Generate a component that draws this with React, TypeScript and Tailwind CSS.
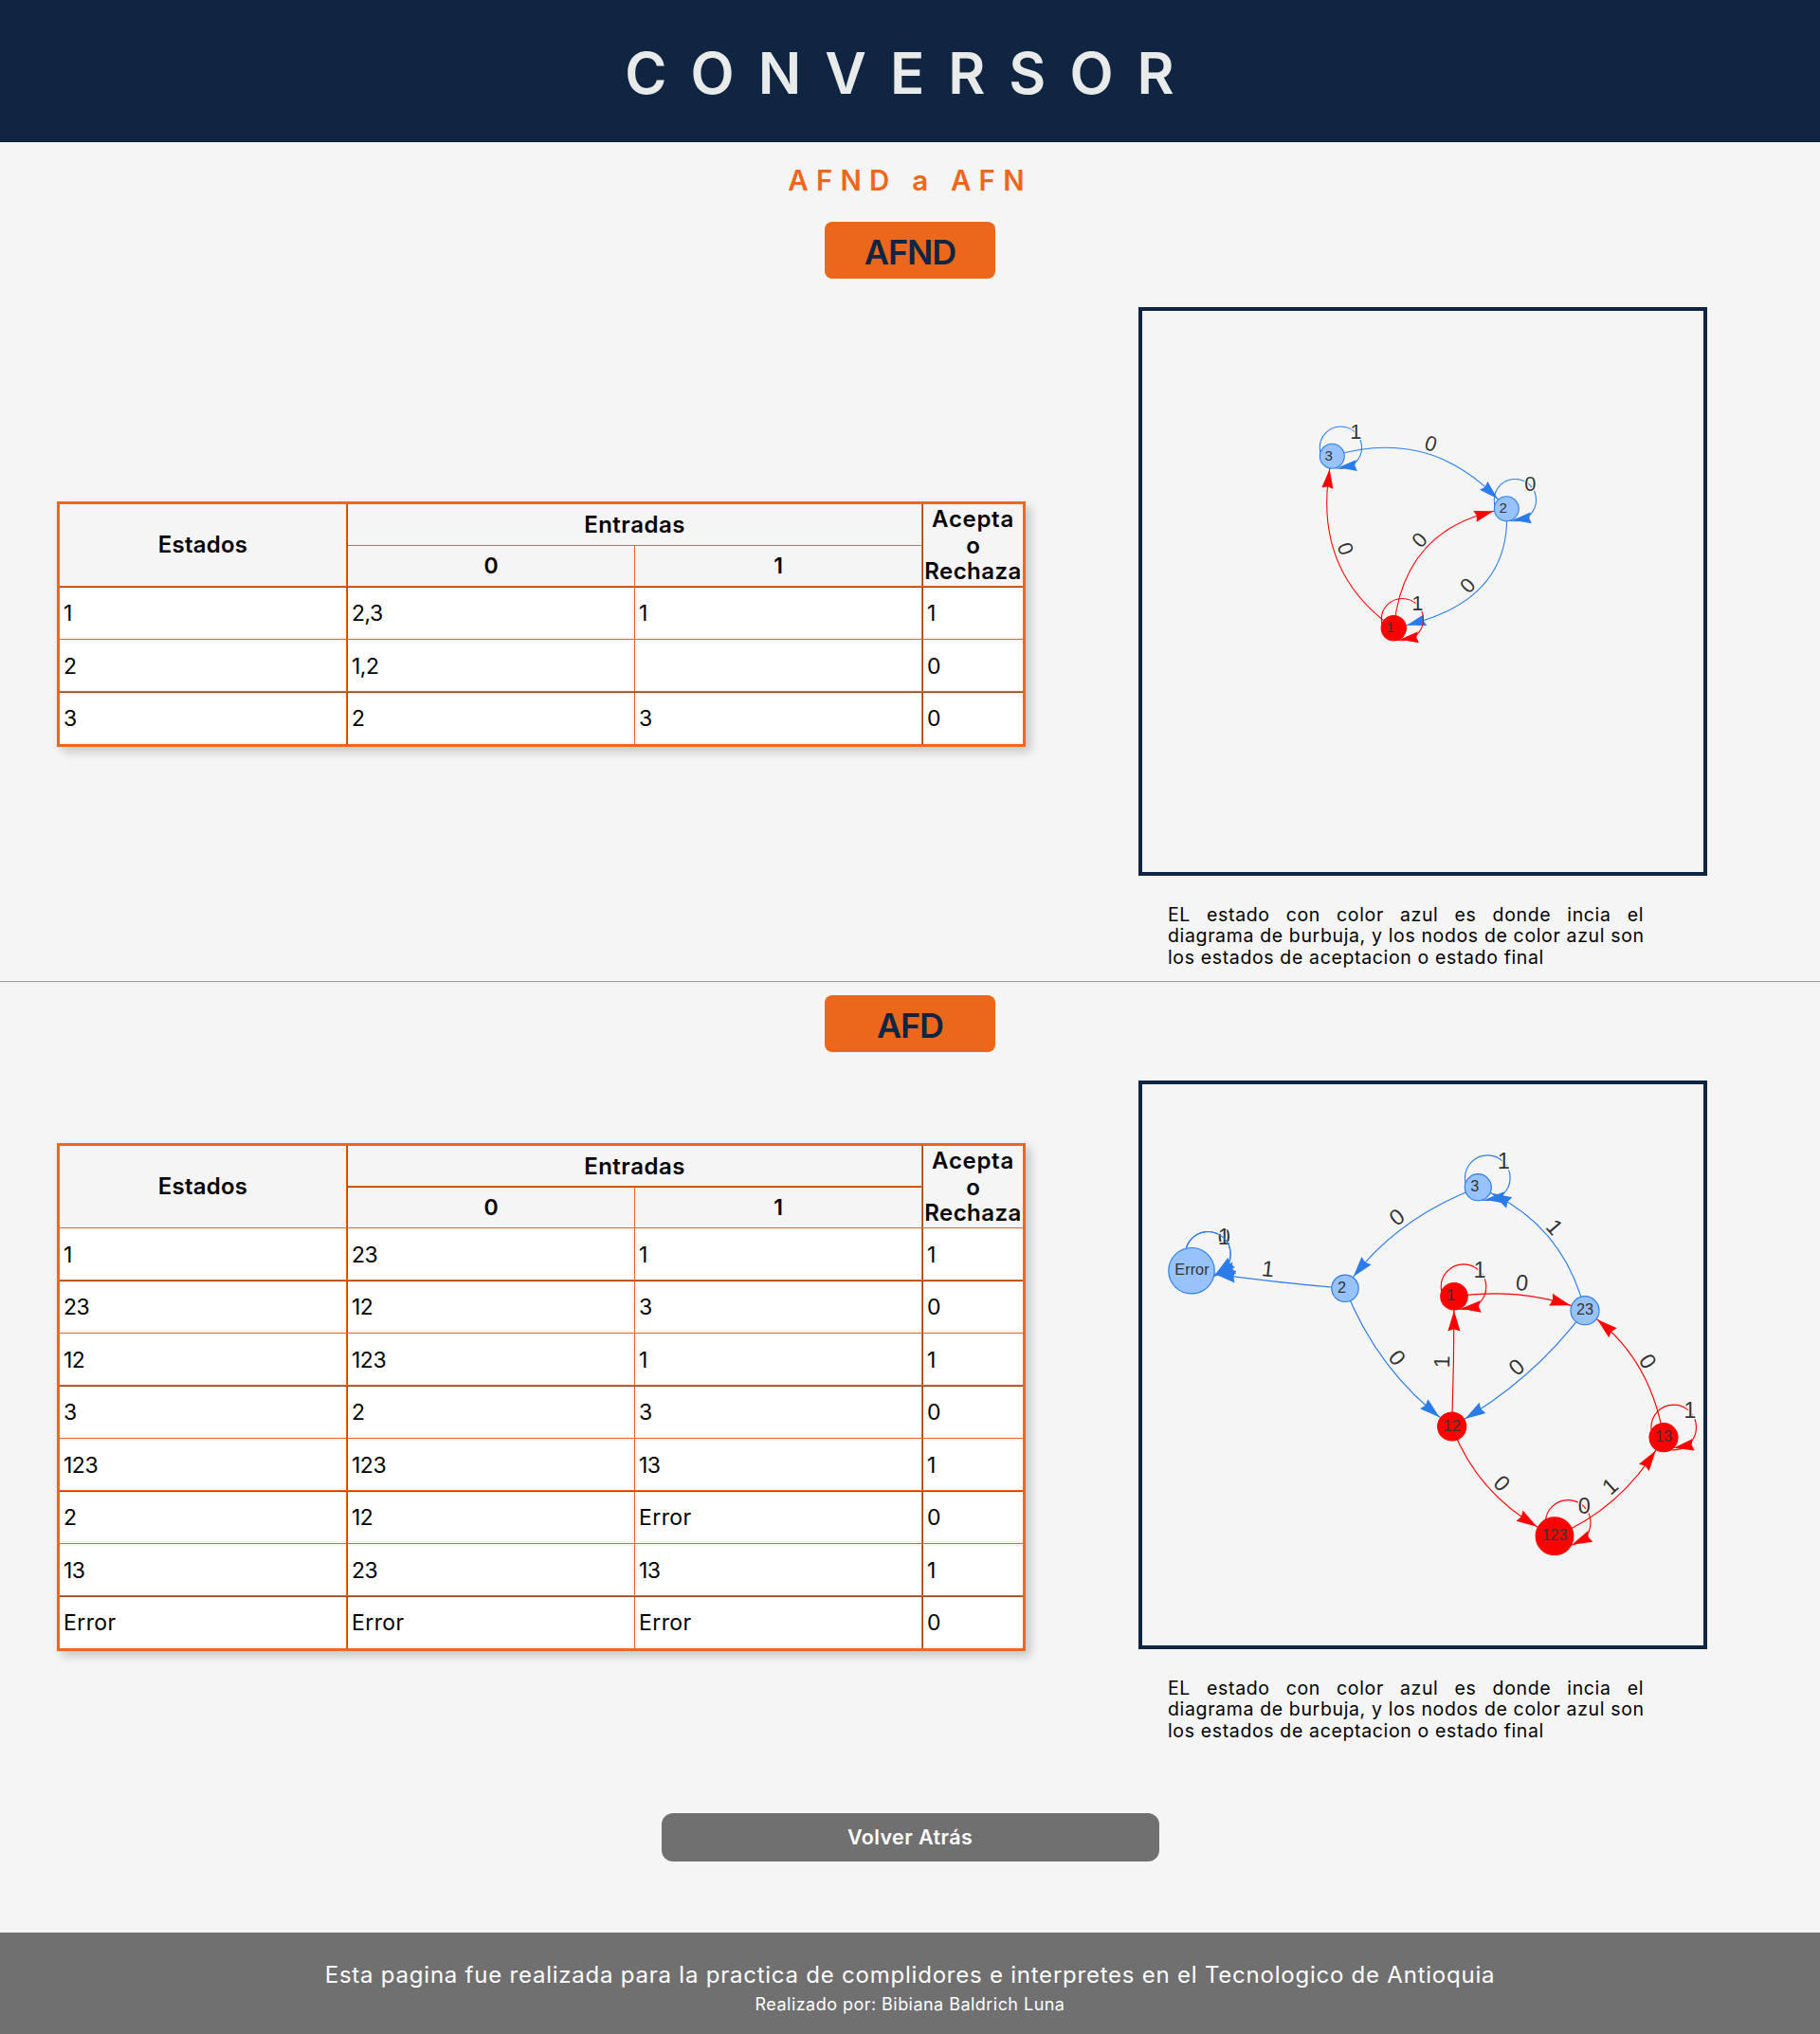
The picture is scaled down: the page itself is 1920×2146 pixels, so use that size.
import type { ReactNode } from 'react';

type Row = string[];

/* ---------- transition tables ---------- */

function VThick() {
  return <div className="w-[2px] shrink-0 border-r border-[#9c4617] bg-[#ee671c]" />;
}

function VThin() {
  return <div className="w-px shrink-0 bg-[#ee671c]" />;
}

function HLine({ thick }: { thick: boolean }) {
  return thick ? (
    <div className="h-[2px] border-b border-[#9c4617] bg-[#ee671c]" />
  ) : (
    <div className="h-px bg-[#ee671c]" />
  );
}

function BodyRow({ row, thickAbove }: { row: Row; thickAbove: boolean }) {
  const pad = thickAbove ? 'pt-px pb-[2px]' : 'pt-[2px] pb-px';
  const text = `flex h-full items-center bg-white ${thickAbove ? 'pt-[2px]' : 'pt-px'}`;
  const track = (s: string) => (s === 'Error' ? 'tracking-[0.4px]' : 'tracking-[-0.5px]');
  return (
    <div className="flex h-[54px] text-[23px] leading-none">
      <div className={`w-[302px] pl-px ${pad}`}>
        <div className={`${text} pl-[3px] ${track(row[0])}`}>{row[0]}</div>
      </div>
      <VThick />
      <div className={`w-[302px] pr-[2px] ${pad}`}>
        <div className={`${text} pl-1 ${track(row[1])}`}>{row[1]}</div>
      </div>
      <VThin />
      <div className={`w-[302px] pl-[2px] ${pad}`}>
        <div className={`${text} pl-[2px] ${track(row[2])}`}>{row[2]}</div>
      </div>
      <VThick />
      <div className={`w-[105px] ${pad}`}>
        <div className={`${text} pl-1`}>{row[3]}</div>
      </div>
    </div>
  );
}

function StateTable({ rows, thickFirst }: { rows: Row[]; thickFirst: boolean }) {
  return (
    <div className="w-[1022px] border-[3px] border-[#ee671c] shadow-[5px_5px_10px_rgba(0,0,0,0.2)]">
      <div className="flex h-[86px] bg-[#f5f5f5] text-[24px] font-semibold leading-none">
        <div className="flex w-[302px] items-center justify-center tracking-[0.2px]">Estados</div>
        <VThick />
        <div className="flex w-[605px] flex-col">
          <div className="flex flex-1 items-center justify-center pt-px tracking-[0.5px]">Entradas</div>
          <HLine thick={!thickFirst} />
          <div className="flex h-[42px]">
            <div className="flex w-[302px] items-center justify-center text-[23px]">0</div>
            <VThin />
            <div className="flex w-[302px] items-center justify-center text-[23px]">1</div>
          </div>
        </div>
        <VThick />
        <div className="flex w-[105px] flex-col items-center justify-center pt-px leading-[27.5px]">
          <span className="tracking-[0.7px]">Acepta</span>
          <span>o</span>
          <span className="tracking-[0.45px]">Rechaza</span>
        </div>
      </div>
      {rows.map((row, i) => {
        const thick = thickFirst ? i % 2 === 0 : i % 2 === 1;
        return (
          <div key={i}>
            <HLine thick={thick} />
            <BodyRow row={row} thickAbove={thick} />
          </div>
        );
      })}
    </div>
  );
}

/* ---------- state diagrams ---------- */

type Pt = [number, number];
const BLUE = '#2B7CE9';
const RED = '#ff0000';

function Arrow({ tip, angle, size, color }: { tip: Pt; angle: number; size: number; color: string }) {
  const pts = [
    [0, 0],
    [-1, 0.3],
    [-0.9, 0],
    [-1, -0.3],
  ]
    .map(([x, y]) => {
      const px = x * size;
      const py = y * size;
      return `${tip[0] + px * Math.cos(angle) - py * Math.sin(angle)},${
        tip[1] + px * Math.sin(angle) + py * Math.cos(angle)
      }`;
    })
    .join(' ');
  return <polygon points={pts} fill={color} />;
}

function EdgeLabel({ at, deg, zoom, children }: { at: Pt; deg?: number; zoom: number; children: ReactNode }) {
  const size = 20.5 * zoom;
  return (
    <text
      transform={`translate(${at[0]} ${at[1]}) rotate(${deg ?? 0})`}
      y={size * 0.36}
      fontSize={size}
      textAnchor="middle"
      fill="#343434"
      stroke="#ffffff"
      strokeWidth={2 * zoom}
      strokeLinejoin="round"
      paintOrder="stroke"
    >
      {children}
    </text>
  );
}

type Edge = { from: Pt; via: Pt; to: Pt; r: number; color: string; label: string; at: Pt; deg: number };

function CurvedEdge({ edge, zoom }: { edge: Edge; zoom: number }) {
  const { from, via, to, r, color, label, at, deg } = edge;
  const point = (t: number): Pt => [
    (1 - t) * (1 - t) * from[0] + 2 * t * (1 - t) * via[0] + t * t * to[0],
    (1 - t) * (1 - t) * from[1] + 2 * t * (1 - t) * via[1] + t * t * to[1],
  ];
  let lo = 0.4;
  let hi = 1;
  for (let i = 0; i < 20; i++) {
    const mid = (lo + hi) / 2;
    const p = point(mid);
    if (Math.hypot(p[0] - to[0], p[1] - to[1]) > r) lo = mid;
    else hi = mid;
  }
  const tip = point(lo);
  const guide = point(lo - 0.1);
  return (
    <g>
      <path
        d={`M${from[0]} ${from[1]}Q${via[0]} ${via[1]} ${to[0]} ${to[1]}`}
        fill="none"
        stroke={color}
        strokeWidth={zoom}
      />
      <Arrow tip={tip} angle={Math.atan2(tip[1] - guide[1], tip[0] - guide[0])} size={19 * zoom} color={color} />
      <EdgeLabel at={at} deg={deg} zoom={zoom}>
        {label}
      </EdgeLabel>
    </g>
  );
}

type Loop = { node: Pt; off: number; color: string; labels: string[]; tip: Pt; back: Pt };

function SelfLoop({ loop, zoom }: { loop: Loop; zoom: number }) {
  const { node, off, color, labels, tip, back } = loop;
  const cx = node[0] + off;
  const cy = node[1] - off;
  return (
    <g>
      <circle cx={cx} cy={cy} r={20.7 * zoom} fill="none" stroke={color} strokeWidth={zoom} />
      <Arrow
        tip={[node[0] + tip[0], node[1] + tip[1]]}
        angle={Math.atan2(tip[1] - back[1], tip[0] - back[0])}
        size={18.5 * zoom}
        color={color}
      />
      {labels.map((l) => (
        <EdgeLabel key={l} at={[cx + 14.8 * zoom, cy - 16 * zoom]} zoom={zoom}>
          {l}
        </EdgeLabel>
      ))}
    </g>
  );
}

type StateNode = { at: Pt; r: number; label: string; red?: boolean; dx?: number };

function Diagram({
  viewBox,
  zoom,
  nodes,
  edges,
  loops,
}: {
  viewBox: string;
  zoom: number;
  nodes: StateNode[];
  edges: Edge[];
  loops: Loop[];
}) {
  return (
    <div className="h-[600px] w-[600px] border-4 border-[#102542]">
      <svg viewBox={viewBox} className="block h-full w-full font-['Liberation_Sans',Arial,sans-serif]">
        {edges.map((e, i) => (
          <CurvedEdge key={i} edge={e} zoom={zoom} />
        ))}
        {loops.map((l, i) => (
          <SelfLoop key={i} loop={l} zoom={zoom} />
        ))}
        {nodes.map((n) => (
          <g key={n.label}>
            <circle
              cx={n.at[0]}
              cy={n.at[1]}
              r={n.r - zoom / 2}
              fill={n.red ? RED : '#97C2FC'}
              stroke={n.red ? RED : BLUE}
              strokeWidth={zoom}
            />
            <text
              x={n.at[0] + (n.dx ?? 0)}
              y={n.at[1] - 1 + 14 * zoom * 0.36}
              fontSize={14.2 * zoom}
              textAnchor="middle"
              fill="#343434"
            >
              {n.label}
            </text>
          </g>
        ))}
      </svg>
    </div>
  );
}

const A1: Pt = [1470.3, 662.7];
const A2: Pt = [1589.3, 536.7];
const A3: Pt = [1405.3, 481.3];

const afndNodes: StateNode[] = [
  { at: A3, r: 13.5, label: '3', dx: -3.5 },
  { at: A2, r: 13.5, label: '2', dx: -3.5 },
  { at: A1, r: 13.7, label: '1', dx: -3.5, red: true },
];
const afndEdges: Edge[] = [
  { from: A3, via: [1514, 448.3], to: A2, r: 14, color: BLUE, label: '0', at: [1509.7, 467.7], deg: 16.7 },
  { from: A2, via: [1596, 638.5], to: A1, r: 14, color: BLUE, label: '0', at: [1548, 617.3], deg: -46.6 },
  { from: A1, via: [1481.5, 553.7], to: A2, r: 14, color: RED, label: '0', at: [1497.3, 569.3], deg: -46.6 },
  { from: A1, via: [1379.8, 599.3], to: A3, r: 14, color: RED, label: '0', at: [1419.7, 578.7], deg: 70.3 },
];
const afndLoops: Loop[] = [
  { node: A3, off: 9.1, color: BLUE, labels: ['1'], tip: [6.3, 12], back: [23.7, 10] },
  { node: A2, off: 9.1, color: BLUE, labels: ['0'], tip: [6.3, 12], back: [23.7, 10] },
  { node: A1, off: 9.1, color: RED, labels: ['1'], tip: [6.3, 12], back: [23.7, 10] },
];

const BE: Pt = [1257, 1340.7];
const B2: Pt = [1419, 1359.3];
const B3: Pt = [1559.3, 1252.7];
const B23: Pt = [1672, 1382.7];
const B1: Pt = [1534, 1367.7];
const B12: Pt = [1531.7, 1505];
const B13: Pt = [1755, 1516.7];
const B123: Pt = [1640, 1620.7];

const afdNodes: StateNode[] = [
  { at: BE, r: 24.8, label: 'Error', dx: 0.5 },
  { at: B2, r: 14.8, label: '2', dx: -3.5 },
  { at: B3, r: 14.6, label: '3', dx: -3.5 },
  { at: B23, r: 15.6, label: '23' },
  { at: B1, r: 14.8, label: '1', dx: -3.5, red: true },
  { at: B12, r: 15.6, label: '12', red: true },
  { at: B13, r: 15.6, label: '13', red: true },
  { at: B123, r: 20.4, label: '123', red: true },
];
const afdEdges: Edge[] = [
  { from: B3, via: [1467, 1288], to: B2, r: 15, color: BLUE, label: '0', at: [1473.3, 1283.7], deg: -37 },
  { from: B2, via: [1338, 1352.5], to: BE, r: 25, color: BLUE, label: '1', at: [1337.7, 1338.3], deg: 6.5 },
  { from: B2, via: [1454.6, 1449.8], to: B12, r: 16, color: BLUE, label: '0', at: [1474.3, 1432.3], deg: 52.3 },
  { from: B23, via: [1648.3, 1288.3], to: B3, r: 15, color: BLUE, label: '1', at: [1640.3, 1294.3], deg: 49 },
  { from: B1, via: [1609, 1357.8], to: B23, r: 16, color: RED, label: '0', at: [1605.7, 1353], deg: 6.2 },
  { from: B23, via: [1616.2, 1458.2], to: B12, r: 16, color: BLUE, label: '0', at: [1599.7, 1442], deg: -41 },
  { from: B12, via: [1534, 1436], to: B1, r: 15, color: RED, label: '1', at: [1520.7, 1436.7], deg: -89 },
  { from: B13, via: [1740.5, 1428.3], to: B23, r: 16, color: RED, label: '0', at: [1738.7, 1436], deg: 58.2 },
  { from: B12, via: [1560.2, 1582.2], to: B123, r: 21, color: RED, label: '0', at: [1584.7, 1564.7], deg: 46.9 },
  { from: B123, via: [1712.5, 1591.3], to: B13, r: 16, color: RED, label: '1', at: [1698.3, 1567.7], deg: -42 },
];
const afdLoops: Loop[] = [
  { node: BE, off: 17.4, color: BLUE, labels: ['0', '1'], tip: [25, 3.7], back: [40, -7] },
  { node: BE, off: 17.4, color: BLUE, labels: [], tip: [25, 3.7], back: [42, -2] },
  { node: B3, off: 10, color: BLUE, labels: ['1'], tip: [7, 13], back: [26.3, 11] },
  { node: B1, off: 10, color: RED, labels: ['1'], tip: [7, 13], back: [26.3, 11] },
  { node: B13, off: 10.7, color: RED, labels: ['1'], tip: [10.7, 11], back: [28.7, 8] },
  { node: B123, off: 14.2, color: RED, labels: ['0'], tip: [18.3, 9], back: [36.7, 0.7] },
];

/* ---------- page ---------- */

function Caption() {
  return (
    <div className="ml-[31px] mt-[30px] w-[502px] text-[19.5px] leading-[22.4px] tracking-[0.64px]">
      <p className="whitespace-nowrap [text-align-last:justify]">EL estado con color azul es donde incia el</p>
      <p className="whitespace-nowrap [text-align-last:justify]">
        diagrama de burbuja, y los nodos de color azul son
      </p>
      <p className="whitespace-nowrap">los estados de aceptacion o estado final</p>
    </div>
  );
}

function Badge({ children }: { children: ReactNode }) {
  return (
    <h3 className="mx-auto flex h-[60px] w-[180px] items-center justify-center rounded-lg bg-[#eb671b] pt-[3px] text-[36px] font-semibold leading-none tracking-[-1.1px] text-[#102542]">
      {children}
    </h3>
  );
}

export default function App() {
  return (
    <div className="flex h-[2146px] w-[1920px] flex-col bg-[#f5f5f5] font-['Inter',sans-serif] text-black">
      <header className="flex h-[150px] items-center justify-center bg-[#102542] pl-[3px] pt-1">
        <h1 className="text-[60px] font-semibold leading-none tracking-[25px] text-[#e8ebea]">CONVERSOR</h1>
      </header>

      <h2 className="flex h-[84px] items-center justify-center pb-[2px] text-[29.5px] font-semibold leading-none tracking-[8.2px] text-[#ee671c]">
        <span className="whitespace-pre">AFND a AFN</span>
      </h2>

      <Badge>AFND</Badge>
      <section className="flex h-[741px] pl-[60px]">
        <div className="flex h-[729px] w-[1141px] items-center">
          <StateTable
            thickFirst
            rows={[
              ['1', '2,3', '1', '1'],
              ['2', '1,2', '', '0'],
              ['3', '2', '3', '0'],
            ]}
          />
        </div>
        <div className="pt-[30px]">
          <Diagram viewBox="1205 328 592 592" zoom={1.07} nodes={afndNodes} edges={afndEdges} loops={afndLoops} />
          <Caption />
        </div>
      </section>

      <hr className="mb-[13px] h-[2px] border-b border-t border-b-[#eeeeee] border-t-[#9a9a9a]" />

      <Badge>AFD</Badge>
      <section className="flex h-[803px] pl-[60px]">
        <div className="flex h-[728px] w-[1141px] items-center">
          <StateTable
            thickFirst={false}
            rows={[
              ['1', '23', '1', '1'],
              ['23', '12', '3', '0'],
              ['12', '123', '1', '1'],
              ['3', '2', '3', '0'],
              ['123', '123', '13', '1'],
              ['2', '12', 'Error', '0'],
              ['13', '23', '13', '1'],
              ['Error', 'Error', 'Error', '0'],
            ]}
          />
        </div>
        <div className="pt-[30px]">
          <Diagram viewBox="1205 1144 592 592" zoom={1.15} nodes={afdNodes} edges={afdEdges} loops={afdLoops} />
          <Caption />
        </div>
      </section>

      <button className="mx-auto h-[51px] w-[525px] rounded-xl bg-[#707070] text-[21.5px] font-semibold leading-none tracking-[0.4px] text-white">
        Volver Atrás
      </button>

      <footer className="mt-auto h-[107px] bg-[#707070] pt-[29px] text-center text-white">
        <p className="text-[24px] leading-[31px] tracking-[0.77px]">
          Esta pagina fue realizada para la practica de complidores e interpretes en el Tecnologico de Antioquia
        </p>
        <p className="text-[18px] leading-[31px] tracking-[0.46px]">Realizado por: Bibiana Baldrich Luna</p>
      </footer>
    </div>
  );
}
